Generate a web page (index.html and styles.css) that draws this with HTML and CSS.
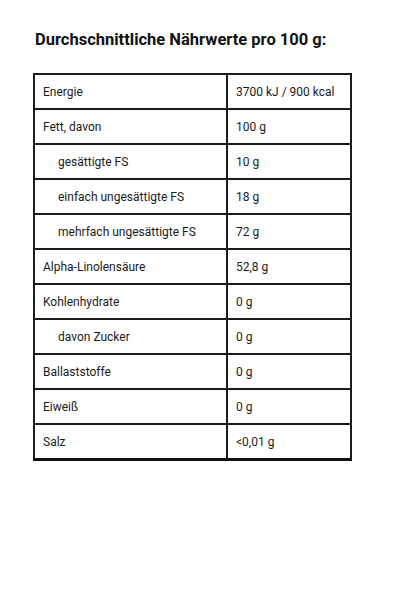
FILE: index.html
```html
<!DOCTYPE html>
<html lang="de">
<head>
<meta charset="utf-8">
<link rel="stylesheet" href="styles.css">
</head>
<body>
<div class="page">
  <h2 class="title">Durchschnittliche Nährwerte pro 100 g:</h2>
  <table class="nutrition">
    <colgroup><col class="c-name"><col class="c-value"></colgroup>
    <tbody>
      <tr><td>Energie</td><td>3700 kJ / 900 kcal</td></tr>
      <tr><td>Fett, davon</td><td>100 g</td></tr>
      <tr><td class="sub">gesättigte FS</td><td>10 g</td></tr>
      <tr><td class="sub">einfach ungesättigte FS</td><td>18 g</td></tr>
      <tr><td class="sub">mehrfach ungesättigte FS</td><td>72 g</td></tr>
      <tr><td>Alpha-Linolensäure</td><td>52,8 g</td></tr>
      <tr><td>Kohlenhydrate</td><td>0 g</td></tr>
      <tr><td class="sub">davon Zucker</td><td>0 g</td></tr>
      <tr><td>Ballaststoffe</td><td>0 g</td></tr>
      <tr><td>Eiweiß</td><td>0 g</td></tr>
      <tr><td>Salz</td><td>&lt;0,01 g</td></tr>
    </tbody>
  </table>
</div>
</body>
</html>
```
FILE: styles.css
```css
html, body {
  margin: 0;
  padding: 0;
  background: #fff;
}
body {
  font-family: Roboto, "Liberation Sans", Arial, sans-serif;
  color: #1b1b1b;
}
.page {
  padding: 30px 49px 0 33px;
}
.title {
  margin: 0 0 23px 2px;
  font-size: 16.5px;
  font-weight: 700;
  line-height: 20px;
  color: #111;
}
.nutrition {
  width: 317px;
  table-layout: fixed;
  border-collapse: collapse;
}
.c-name {
  width: 193px;
}
.c-value {
  width: 124px;
}
.nutrition td {
  border: 2px solid #1c1c1c;
  height: 33px;
  padding: 0 8px;
  font-size: 12px;
  line-height: 14px;
  vertical-align: middle;
  white-space: nowrap;
}
.nutrition td.sub {
  padding-left: 23px;
}
.nutrition tr:last-child td {
  border-bottom: 3px solid #111;
}
```
